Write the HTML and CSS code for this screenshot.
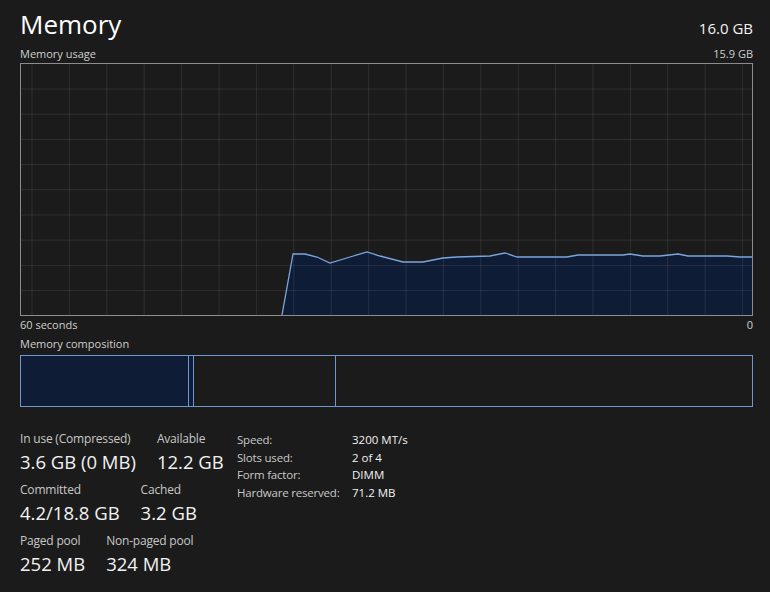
FILE: index.html
```html
<!DOCTYPE html>
<html lang="en">
<head>
  <meta charset="UTF-8">
  <title>Memory</title>
  <link rel="stylesheet" href="styles.css">
</head>
<body>
  <div class="page">
    <div class="head">
      <h1>Memory</h1>
      <span class="total">16.0 GB</span>
    </div>
    <div class="caption">
      <span>Memory usage</span>
      <span>15.9 GB</span>
    </div>

    <div class="chart">
      <svg viewBox="21 64 731 251" width="731" height="251" preserveAspectRatio="none">
        <polygon class="area" points="282,315 293,254 305,254 317,257 330,263 350,257 367,252 380,256 403,262 423,262 443,258 457,257 490,256 505,253 517,257 567,257 578,255 623,255 630,254 643,256 660,256 678,254 688,256 727,256 740,257 752,257 752,315"/>
        <g class="grid">
          <line x1="21" x2="752" y1="89" y2="89"/>
          <line x1="21" x2="752" y1="114.2" y2="114.2"/>
          <line x1="21" x2="752" y1="139.4" y2="139.4"/>
          <line x1="21" x2="752" y1="164.6" y2="164.6"/>
          <line x1="21" x2="752" y1="189.8" y2="189.8"/>
          <line x1="21" x2="752" y1="215" y2="215"/>
          <line x1="21" x2="752" y1="240.2" y2="240.2"/>
          <line x1="21" x2="752" y1="265.4" y2="265.4"/>
          <line x1="21" x2="752" y1="290.6" y2="290.6"/>
        </g>
        <g class="grid" id="vgrid"></g>
        <polyline class="curve" points="282,315 293,254 305,254 317,257 330,263 350,257 367,252 380,256 403,262 423,262 443,258 457,257 490,256 505,253 517,257 567,257 578,255 623,255 630,254 643,256 660,256 678,254 688,256 727,256 740,257 752,257"/>
      </svg>
    </div>

    <div class="caption axis">
      <span>60 seconds</span>
      <span>0</span>
    </div>
    <div class="caption section">
      <span>Memory composition</span>
    </div>

    <div class="composition">
      <div class="seg in-use"></div>
      <div class="seg modified"></div>
      <div class="seg standby"></div>
      <div class="seg free"></div>
    </div>

    <div class="stats">
      <div class="stats-main">
        <div class="stat-row">
          <div class="stat"><div class="label">In use (Compressed)</div><div class="value">3.6 GB (0 MB)</div></div>
          <div class="stat"><div class="label">Available</div><div class="value">12.2 GB</div></div>
        </div>
        <div class="stat-row">
          <div class="stat"><div class="label">Committed</div><div class="value">4.2/18.8 GB</div></div>
          <div class="stat"><div class="label">Cached</div><div class="value">3.2 GB</div></div>
        </div>
        <div class="stat-row">
          <div class="stat"><div class="label">Paged pool</div><div class="value">252 MB</div></div>
          <div class="stat"><div class="label">Non-paged pool</div><div class="value">324 MB</div></div>
        </div>
      </div>

      <table class="props">
        <tr><td>Speed:</td><td>3200 MT/s</td></tr>
        <tr><td>Slots used:</td><td>2 of 4</td></tr>
        <tr><td>Form factor:</td><td>DIMM</td></tr>
        <tr><td>Hardware reserved:</td><td>71.2 MB</td></tr>
      </table>
    </div>
  </div>

  <script>
    // vertical grid lines, one every 37.4px
    const vgrid = document.getElementById('vgrid');
    for (let i = 0; i < 20; i++) {
      const x = 32 + i * 37.4;
      const l = document.createElementNS('http://www.w3.org/2000/svg', 'line');
      l.setAttribute('x1', x);
      l.setAttribute('x2', x);
      l.setAttribute('y1', 64);
      l.setAttribute('y2', 315);
      vgrid.appendChild(l);
    }
  </script>
</body>
</html>
```

FILE: styles.css
```css
body {
  margin: 0;
  background-color: #1b1b1b;
  color: #f2f2f2;
  font-family: 'Open Sans', 'Noto Sans', sans-serif;
}
.page {
  padding: 0 17px 0 20px;
}
.head {
  display: flex;
  justify-content: space-between;
  align-items: baseline;
  height: 47px;
}
.head h1 {
  margin: 0;
  padding-top: 2px;
  font-size: 26px;
  font-weight: 400;
  line-height: 45px;
  color: #fff;
}
.total {
  font-size: 15px;
}
.caption {
  display: flex;
  justify-content: space-between;
  font-size: 11px;
  line-height: 13px;
  height: 13px;
  color: #cfcfcf;
}
.chart {
  margin-top: 3px;
  border: 1px solid #8c8c8c;
  height: 251px;
}
.chart svg {
  display: block;
}
.area {
  fill: #0f1c35;
}
.grid line {
  stroke: rgba(255, 255, 255, 0.09);
  stroke-width: 1;
}
.curve {
  fill: none;
  stroke: #7ca5dc;
  stroke-width: 1.3;
}
.axis {
  margin-top: 2px;
}
.section {
  margin-top: 6px;
}
.composition {
  display: flex;
  margin-top: 5px;
  height: 50px;
  border: 1px solid #6f97d0;
}
.seg {
  border-right: 1px solid #6f97d0;
}
.in-use {
  width: 167px;
  background: #0f1c35;
}
.modified {
  width: 4px;
  background: #0f1c35;
}
.standby {
  width: 141px;
}
.free {
  flex: 1;
  border-right: none;
}
.stats {
  display: flex;
  align-items: flex-start;
  margin-top: 24px;
}
.stats-main {
  width: 217px;
}
.stat-row {
  display: flex;
  gap: 21px;
  margin-bottom: 5px;
  white-space: nowrap;
}
.label {
  font-size: 12px;
  line-height: 16px;
  letter-spacing: -0.2px;
  color: #c8c8c8;
}
.value {
  font-size: 18.5px;
  line-height: 30px;
}
.props {
  border-collapse: collapse;
  table-layout: fixed;
  font-size: 11.5px;
  line-height: 17.7px;
}
.props td {
  padding: 0;
  white-space: nowrap;
}
.props td:first-child {
  width: 115px;
  letter-spacing: -0.2px;
  color: #c8c8c8;
}
```
